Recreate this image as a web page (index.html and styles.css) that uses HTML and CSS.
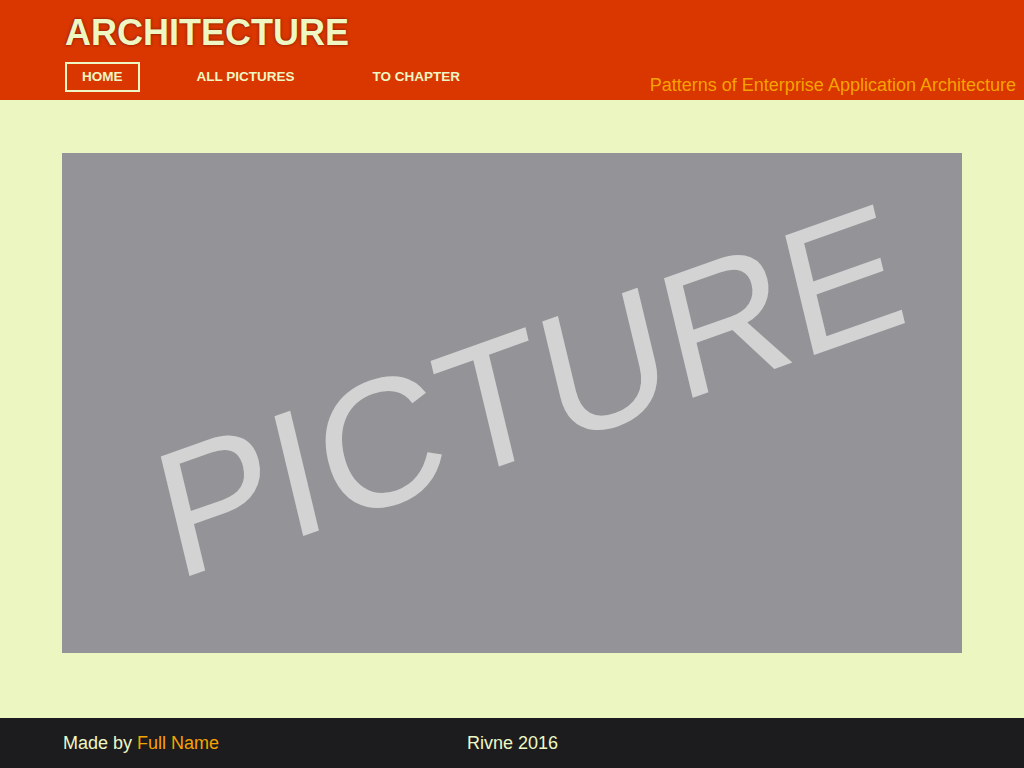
FILE: index.html
```html
<!DOCTYPE html>
<html>
<head>
<meta charset="utf-8">
<link rel="stylesheet" href="styles.css">
</head>
<body>
<header class="header">
  <div class="brand">
    <h1 class="title">ARCHITECTURE</h1>
    <nav class="nav">
      <a class="nav-item active" href="#">HOME</a>
      <a class="nav-item" href="#">ALL PICTURES</a>
      <a class="nav-item" href="#">TO CHAPTER</a>
    </nav>
  </div>
  <div class="subtitle">Patterns of Enterprise Application Architecture</div>
</header>
<main class="main">
  <div class="picture">
    <span class="picture-label">PICTURE</span>
  </div>
</main>
<footer class="footer">
  <div class="made">Made by <span class="accent">Full Name</span></div>
  <div class="place">Rivne 2016</div>
</footer>
</body>
</html>
```
FILE: styles.css
```css
* { box-sizing: border-box; }
html, body { margin: 0; padding: 0; }
body {
  font-family: "Liberation Sans", Arial, sans-serif;
  background: #ebf6c1;
  width: 1024px;
  height: 768px;
  display: flex;
  flex-direction: column;
  overflow: hidden;
}
.header {
  height: 100px;
  background: #d93600;
  display: flex;
  justify-content: space-between;
  align-items: flex-end;
  padding: 0 8px 0 65px;
}
.brand {
  display: flex;
  flex-direction: column;
  align-self: stretch;
}
.title {
  margin: 0;
  padding-top: 13px;
  font-size: 36px;
  line-height: 40px;
  font-weight: bold;
  color: #eef7c3;
  text-shadow: 0 0 3px #6a1500;
}
.nav {
  display: flex;
  margin-top: 9px;
}
.nav-item {
  display: block;
  height: 30px;
  padding: 0 15px;
  border: 2px solid transparent;
  color: #eef7c3;
  font-size: 13.5px;
  font-weight: bold;
  line-height: 26px;
  text-decoration: none;
}
.nav-item.active { border-color: #eef7c3; margin-right: 40px; }
.nav-item:nth-child(2) { margin-right: 44px; }
.subtitle {
  color: #f5a300;
  font-size: 18px;
  line-height: 20px;
  padding-bottom: 5px;
}
.main {
  flex: 1;
  padding: 53px 62px 0;
}
.picture {
  width: 900px;
  height: 500px;
  background: #949398;
  position: relative;
  overflow: hidden;
  display: flex;
  align-items: center;
  justify-content: center;
}
.picture-label {
  font-size: 178px;
  line-height: 1;
  color: #d3d3d3;
  white-space: nowrap;
  transform: translate(18px, -12px) rotate(-19.5deg) skewX(-6deg);
}
.footer {
  height: 50px;
  background: #1c1c1e;
  display: flex;
  align-items: center;
  padding-left: 63px;
  font-size: 18px;
  color: #eef7c3;
}
.made { width: 404px; }
.accent { color: #f5a300; }
```
